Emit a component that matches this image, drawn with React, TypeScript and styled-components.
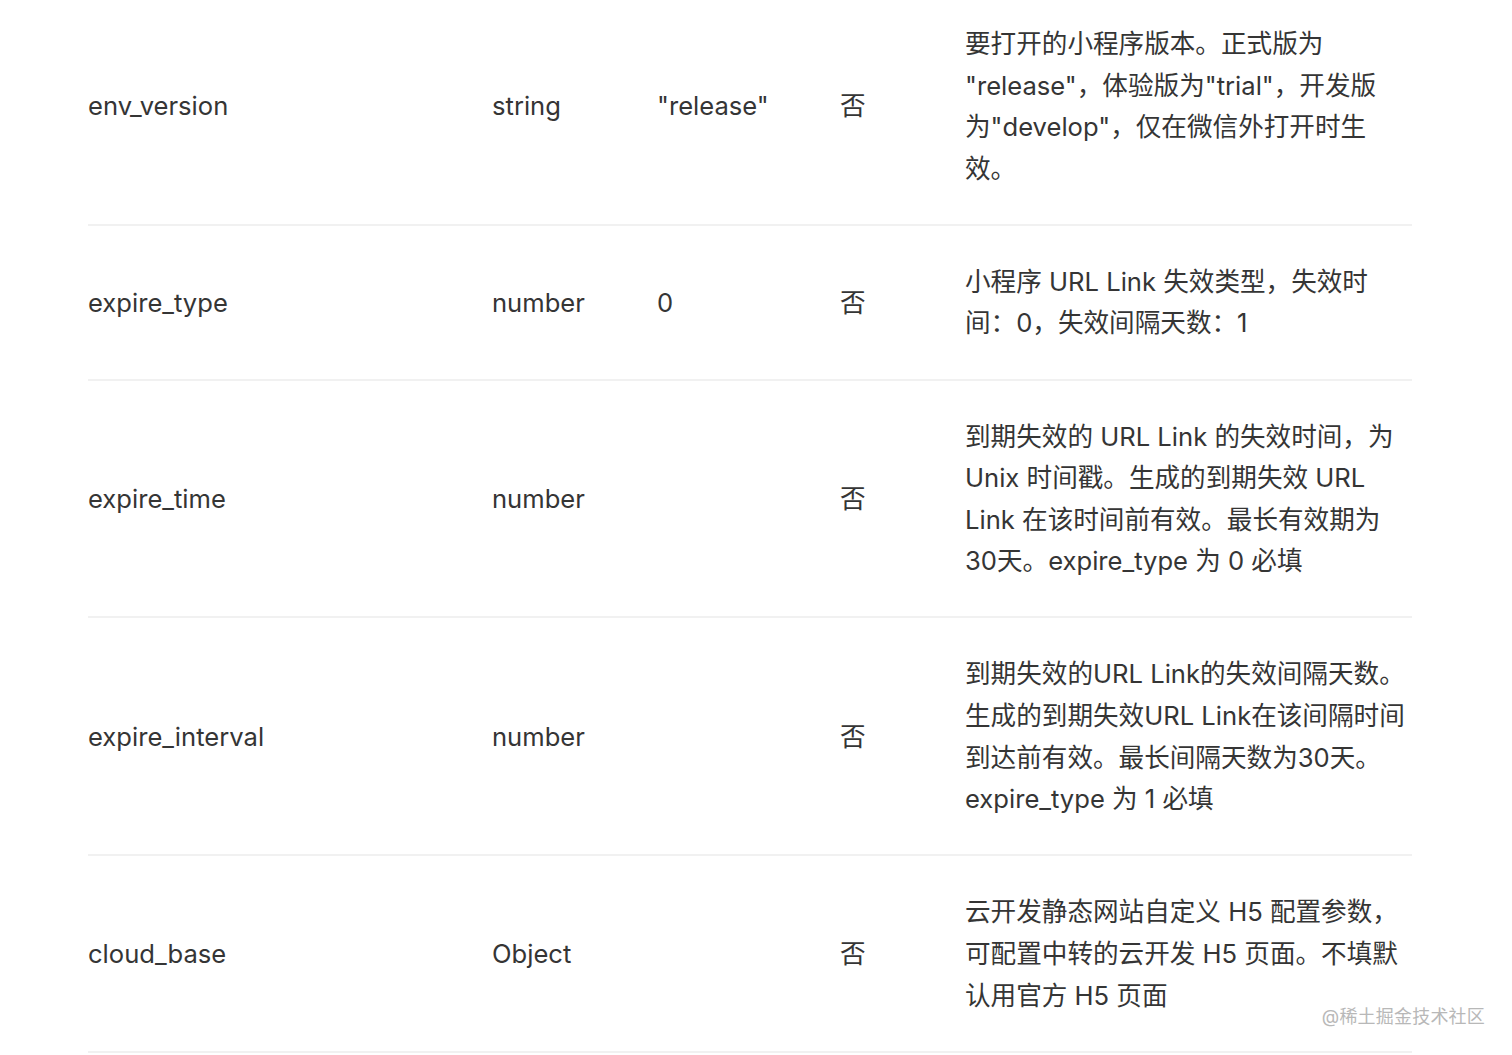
import React from 'react'
import styled, { createGlobalStyle } from 'styled-components'

const GlobalStyle = createGlobalStyle`
  html, body {
    margin: 0;
    padding: 0;
    background: #fff;
    overflow: hidden;
  }
  body {
    font-family: "Inter", "Noto Sans CJK SC", sans-serif;
    color: #353535;
  }
`

const Page = styled.div`
  position: relative;
  width: 1512px;
  height: 1055px;
  overflow: hidden;
`

const Table = styled.div`
  margin: -12px 0 0 88px;
  width: 1324px;
`

const Row = styled.div`
  display: grid;
  grid-template-columns: 404px 165px 183px 125px 1fr;
  align-items: center;
  padding: 35px 0 34.5px;
  border-bottom: 2px solid #f1f1f1;
  font-size: 25.6px;
  line-height: 41.6px;
`

const Cell = styled.div`
  white-space: nowrap;
`

const Desc = styled.div`
  display: flex;
  flex-direction: column;
`

const Line = styled.span`
  white-space: nowrap;
`

const Watermark = styled.div`
  position: absolute;
  right: 27px;
  bottom: 26px;
  font-size: 18px;
  line-height: 24px;
  color: #b8b8b8;
  letter-spacing: 0.2px;
`

type Param = {
  name: string
  type: string
  value: string
  required: string
  desc: string[]
}

const params: Param[] = [
  {
    name: 'env_version',
    type: 'string',
    value: '"release"',
    required: '否',
    desc: [
      '要打开的小程序版本。正式版为',
      '"release"，体验版为"trial"，开发版',
      '为"develop"，仅在微信外打开时生',
      '效。',
    ],
  },
  {
    name: 'expire_type',
    type: 'number',
    value: '0',
    required: '否',
    desc: ['小程序 URL Link 失效类型，失效时', '间：0，失效间隔天数：1'],
  },
  {
    name: 'expire_time',
    type: 'number',
    value: '',
    required: '否',
    desc: [
      '到期失效的 URL Link 的失效时间，为',
      'Unix 时间戳。生成的到期失效 URL',
      'Link 在该时间前有效。最长有效期为',
      '30天。expire_type 为 0 必填',
    ],
  },
  {
    name: 'expire_interval',
    type: 'number',
    value: '',
    required: '否',
    desc: [
      '到期失效的URL Link的失效间隔天数。',
      '生成的到期失效URL Link在该间隔时间',
      '到达前有效。最长间隔天数为30天。',
      'expire_type 为 1 必填',
    ],
  },
  {
    name: 'cloud_base',
    type: 'Object',
    value: '',
    required: '否',
    desc: [
      '云开发静态网站自定义 H5 配置参数，',
      '可配置中转的云开发 H5 页面。不填默',
      '认用官方 H5 页面',
    ],
  },
]

export default function App() {
  return (
    <Page>
      <GlobalStyle />
      <Table>
        {params.map(p => (
          <Row key={p.name}>
            <Cell>{p.name}</Cell>
            <Cell>{p.type}</Cell>
            <Cell>{p.value}</Cell>
            <Cell>{p.required}</Cell>
            <Desc>
              {p.desc.map((l, i) => (
                <Line key={i}>{l}</Line>
              ))}
            </Desc>
          </Row>
        ))}
      </Table>
      <Watermark>@稀土掘金技术社区</Watermark>
    </Page>
  )
}
